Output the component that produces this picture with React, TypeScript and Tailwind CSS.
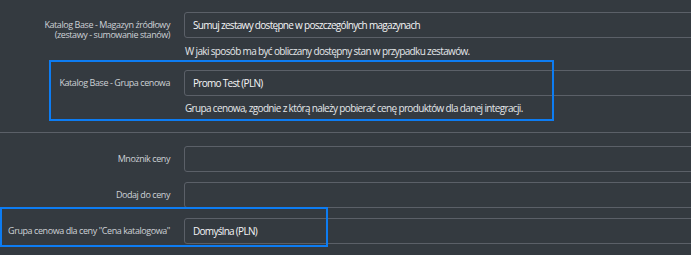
import React from "react";

const font = { fontFamily: '"Open Sans", "Noto Sans", sans-serif' };

function Input({ value }: { value?: string }) {
  return (
    <div className="h-[26px] w-[540px] shrink-0 rounded-[3px] border border-[#5b6068] pl-[8px] flex items-center text-[10px] tracking-[-0.7px] text-[#f4f5f7]">
      {value}
    </div>
  );
}

const labelCls =
  "w-[170px] shrink-0 pt-[8px] text-right text-[9px] tracking-[-0.43px] leading-[10px] text-[#cdd1d6]";

const helpCls = "pl-[1px] text-[10px] tracking-[-0.65px] leading-[14px] text-[#e4e7ea]";

export default function App() {
  return (
    <div className="relative w-[691px] h-[255px] overflow-hidden bg-[#343a40]" style={font}>
      <div className="flex flex-col pt-[12px]">
        <div className="flex">
          <div className={labelCls}>
            Katalog Base - Magazyn źródłowy
            <br />
            (zestawy - sumowanie stanów)
          </div>
          <div className="ml-[14px] flex flex-col">
            <Input value="Sumuj zestawy dostępne w poszczególnych magazynach" />
            <div className={"mt-[6px] " + helpCls}>
              W jaki sposób ma być obliczany dostępny stan w przypadku zestawów.
            </div>
          </div>
        </div>

        <div className="mt-[12px] flex">
          <div className={labelCls}>Katalog Base - Grupa cenowa</div>
          <div className="ml-[14px] flex flex-col">
            <Input value="Promo Test (PLN)" />
            <div className={"mt-[5px] " + helpCls}>
              Grupa cenowa, zgodnie z którą należy pobierać cenę produktów dla danej integracji.
            </div>
          </div>
        </div>

        <div className="mt-[17px] h-px w-full bg-[#5b6068]" />

        <div className="mt-[13px] flex flex-col gap-[10px]">
          <div className="flex">
            <div className={labelCls}>Mnożnik ceny</div>
            <div className="ml-[14px]">
              <Input />
            </div>
          </div>
          <div className="flex">
            <div className={labelCls}>Dodaj do ceny</div>
            <div className="ml-[14px]">
              <Input />
            </div>
          </div>
          <div className="flex">
            <div className={labelCls + " whitespace-nowrap"}>Grupa cenowa dla ceny "Cena katalogowa"</div>
            <div className="ml-[14px]">
              <Input value="Domyślna (PLN)" />
            </div>
          </div>
        </div>
      </div>

      <div className="pointer-events-none absolute left-[49px] top-[60px] h-[61px] w-[505px] border-2 border-[#0d7cf2]" />
      <div className="pointer-events-none absolute left-0 top-[207px] h-[40px] w-[328px] border-2 border-[#0d7cf2]" />
    </div>
  );
}
